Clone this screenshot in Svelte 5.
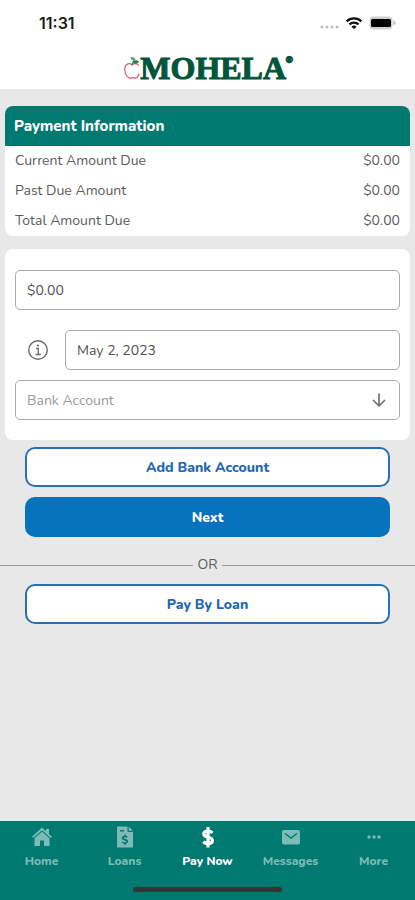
<script lang="ts">
	interface AmountRow {
		label: string;
		value: string;
	}

	const amounts: AmountRow[] = [
		{ label: 'Current Amount Due', value: '$0.00' },
		{ label: 'Past Due Amount', value: '$0.00' },
		{ label: 'Total Amount Due', value: '$0.00' }
	];

	const tabs = [
		{ id: 'home', label: 'Home' },
		{ id: 'loans', label: 'Loans' },
		{ id: 'pay', label: 'Pay Now' },
		{ id: 'messages', label: 'Messages' },
		{ id: 'more', label: 'More' }
	];

	let amount = $state('$0.00');
	let paymentDate = $state('May 2, 2023');
	let bankAccount = $state('');
	let activeTab = $state('pay');
</script>

<div class="screen">
	<div class="status-bar">
		<span class="time">11:31</span>
		<div class="status-icons">
			<svg width="20" height="16" viewBox="0 0 20 16" fill="#bdbdbd" aria-hidden="true">
				<circle cx="3" cy="12" r="1.5" />
				<circle cx="8" cy="12" r="1.5" />
				<circle cx="13" cy="12" r="1.5" />
				<circle cx="18" cy="12" r="1.5" />
			</svg>
			<svg width="18" height="16" viewBox="0 0 18 16" fill="none" stroke="#111" stroke-width="2.2" aria-hidden="true">
				<path d="M1.6 6.4a10.6 10.6 0 0 1 14.8 0" />
				<path d="M4.4 9.4a6.6 6.6 0 0 1 9.2 0" />
				<path d="M9 14.2 6.4 11.6a3.8 3.8 0 0 1 5.2 0z" fill="#111" stroke="none" />
			</svg>
			<svg width="27" height="16" viewBox="0 0 27 16" aria-hidden="true">
				<rect x="0.5" y="1.5" width="23" height="13" rx="4" fill="#cfcfcf" />
				<rect x="2" y="4" width="20" height="8" rx="1.5" fill="#000" />
				<path d="M24.5 5.5c1.4.4 2 1.3 2 2.5s-.6 2.1-2 2.5z" fill="#bbb" />
			</svg>
		</div>
	</div>

	<header class="brand">
		<svg class="apple" width="16" height="26" viewBox="0 0 17 26" fill="none" aria-hidden="true">
			<path
				d="M8.5 9.5C5 6.8.8 9.2.8 14.5c0 4.8 3 9.3 5.8 9.3 1.3 0 1.7-.6 2.6-.6s1.4.6 2.6.6c1.8 0 3.400-2 4.400-4.600M8.500 9.500c2.600-2 5.600-1.400 7.300 1"
				stroke="#dc5a60"
				stroke-width="1.3"
			/>
			<path d="M8.500 10.500C8.800 8 9.500 6 11 4.500" stroke="#387e5b" stroke-width="1.2" />
			<path d="M7 1.500c3-.5 5 .8 5.500 3.500-3 .4-5-.8-5.500-3.500z" fill="#5c9b7b" />
			<path d="M9.500 7c1.800-3 4.500-3 6.500-.8-1.800 2.800-4.500 3-6.500.8z" fill="#2f7d57" />
		</svg>
		<span class="wordmark">MOHELA</span>
		<span class="registered">®</span>
	</header>

	<main>
		<section class="card">
			<h1>Payment Information</h1>
			<dl>
				{#each amounts as row (row.label)}
					<div class="amount-row">
						<dt>{row.label}</dt>
						<dd>{row.value}</dd>
					</div>
				{/each}
			</dl>
		</section>

		<form class="card payment-form" onsubmit={(e) => e.preventDefault()}>
			<input class="field" type="text" aria-label="Payment amount" bind:value={amount} />
			<div class="date-row">
				<button type="button" class="info" aria-label="Payment date information">
					<svg width="22" height="22" viewBox="0 0 22 22" fill="none" stroke="#6b6b6b" aria-hidden="true">
						<circle cx="11" cy="11" r="9.3" stroke-width="1.4" />
						<path d="M9 9.5h2.3v6M8.500 15.500h5.300" stroke-width="1.3" />
						<circle cx="11" cy="6.5" r="1.1" fill="#6b6b6b" stroke="none" />
					</svg>
				</button>
				<input class="field" type="text" aria-label="Payment date" bind:value={paymentDate} />
			</div>
			<div class="select-wrap">
				<select class="field" aria-label="Bank account" bind:value={bankAccount}>
					<option value="">Bank Account</option>
				</select>
				<svg class="arrow" width="16" height="16" viewBox="0 0 16 16" fill="none" stroke="#707070" stroke-width="1.7" stroke-linecap="round" stroke-linejoin="round" aria-hidden="true">
					<path d="M8 2v12M2.500 8.500 8 14l5.500-5.500" />
				</svg>
			</div>
		</form>

		<div class="actions">
			<button type="button" class="btn">Add Bank Account</button>
			<button type="button" class="btn primary">Next</button>
		</div>
		<div class="divider"><span>OR</span></div>
		<div class="actions">
			<button type="button" class="btn">Pay By Loan</button>
		</div>
	</main>

	<nav>
		<div class="tabs">
			{#each tabs as tab (tab.id)}
				<button type="button" class="tab" class:active={activeTab === tab.id} onclick={() => (activeTab = tab.id)}>
					<svg width="24" height="24" viewBox="0 0 24 24" fill="currentColor" aria-hidden="true">
						{#if tab.id === 'home'}
							<path d="M12 2.500 2 11.700l1.300 1.400L12 5.200l8.700 7.900 1.300-1.400-3-2.800V4h-3v2.200z" />
							<path d="M12 6.400 4.500 13.200V21H10v-5.500h4V21h5.500v-7.800z" />
						{:else if tab.id === 'loans'}
							<path
								fill-rule="evenodd"
								d="M4 1.500h10.500V7H20v15.500H4zM7 5v1.500h4V5zM11.300 9.500v1.200c-1.600.3-2.500 1.100-2.500 2.300 0 1.500 1.200 2 2.700 2.400 1.300.3 1.700.5 1.700 1 0 .6-.5.8-1.300.8-.9 0-1.600-.3-2.300-.8l-.9 1.200c.7.6 1.600 1 2.600 1.100V20h1.500v-1.300c1.500-.3 2.300-1.200 2.300-2.400 0-1.500-1.200-2.100-2.700-2.400-1.200-.3-1.700-.5-1.700-1s.5-.7 1.200-.7c.7 0 1.400.2 2 .6l.8-1.200c-.5-.4-1.200-.7-1.900-.8V9.500z"
							/>
							<path d="M15.700 1.500 20 5.800h-4.300z" />
						{:else if tab.id === 'pay'}
							<path
								d="M12 2v20.500M16.500 7.900C15.300 6.700 13.700 6 12 6c-2.500 0-4.200 1.200-4.200 3.100 0 4.300 8.600 2.100 8.600 6.400 0 1.900-1.800 3.100-4.400 3.100-1.900 0-3.500-.7-4.800-1.900"
								fill="none"
								stroke="currentColor"
								stroke-width="3.2"
							/>
						{:else if tab.id === 'messages'}
							<rect x="3" y="5" width="18" height="14.500" rx="2" />
							<path d="m6 8.500 6 4.500 6-4.500" fill="none" stroke="#007970" stroke-width="1.4" />
						{:else}
							<circle cx="7" cy="12" r="1.7" />
							<circle cx="12" cy="12" r="1.7" />
							<circle cx="17" cy="12" r="1.7" />
						{/if}
					</svg>
					<span>{tab.label}</span>
				</button>
			{/each}
		</div>
		<div class="home-indicator"></div>
	</nav>
</div>

<style>
	:global(body) {
		margin: 0;
		background: #e8e8e8;
	}

	.screen {
		min-height: 100vh;
		display: flex;
		flex-direction: column;
		box-sizing: border-box;
		background: #e8e8e8;
		font-family: Nunito, Lato, sans-serif;
		font-size: 14px;
		color: #5c5c5c;
	}

	.status-bar {
		display: flex;
		align-items: center;
		justify-content: space-between;
		height: 46px;
		padding: 0 19px 0 39px;
		background: #fff;
	}

	.time {
		font-family: Inter, sans-serif;
		font-size: 16px;
		font-weight: 600;
		color: #1a1a1a;
	}

	.status-icons {
		display: flex;
		align-items: center;
		gap: 6px;
	}

	.brand {
		display: flex;
		align-items: flex-start;
		justify-content: center;
		height: 43px;
		padding-left: 2px;
		background: #fff;
	}

	.apple {
		margin-top: 9px;
	}

	.wordmark {
		font-family: 'Liberation Serif', serif;
		font-size: 32px;
		line-height: 44px;
		font-weight: 700;
		color: #00553a;
		-webkit-text-stroke: 1px #00553a;
	}

	.registered {
		margin-top: 8px;
		font-family: 'Liberation Sans', sans-serif;
		font-size: 9px;
		line-height: 12px;
		font-weight: 700;
		color: #00553a;
		-webkit-text-stroke: 1px #00553a;
	}

	main {
		flex: 1;
		padding-top: 17px;
	}

	.card {
		margin: 0 5px 13px;
		border-radius: 8px;
		background: #fff;
		overflow: hidden;
	}

	h1 {
		margin: 0;
		padding: 0 9px;
		background: #007970;
		color: #fff;
		font-size: 15px;
		line-height: 40px;
		font-weight: 800;
	}

	dl {
		margin: 0;
		padding: 0 10px;
	}

	.amount-row {
		display: flex;
		justify-content: space-between;
		line-height: 30px;
	}

	dd {
		margin: 0;
	}

	.payment-form {
		margin-bottom: 7px;
		padding: 21px 10px 20px;
	}

	.field {
		display: block;
		width: 100%;
		height: 40px;
		box-sizing: border-box;
		padding: 0 11px;
		border: 1px solid #aaa;
		border-radius: 5px;
		background: #fff;
		font: inherit;
		color: #505050;
		appearance: none;
	}

	.date-row {
		display: flex;
		margin: 20px 0 10px;
	}

	.info {
		display: flex;
		flex: none;
		align-items: center;
		justify-content: center;
		width: 50px;
		padding: 0 4px 0 0;
		border: none;
		background: none;
	}

	.select-wrap {
		position: relative;
	}

	select.field {
		color: #999;
	}

	.arrow {
		position: absolute;
		top: 12px;
		right: 13px;
		pointer-events: none;
	}

	.actions {
		display: flex;
		flex-direction: column;
		gap: 10px;
		padding: 0 25px;
	}

	.btn {
		height: 40px;
		border: 2px solid #2770b8;
		border-radius: 10px;
		background: #fff;
		font: inherit;
		font-weight: 800;
		color: #2367b2;
	}

	.primary {
		border-color: #0873bd;
		background: #0873bd;
		color: #fff;
	}

	.divider {
		display: flex;
		align-items: center;
		gap: 4px;
		margin: 18px 0 9px;
		line-height: 20px;
	}

	.divider::before,
	.divider::after {
		content: '';
		flex: 1;
		height: 1px;
		background: #999;
	}

	nav {
		padding-bottom: 8px;
		border-top: 3px solid #e3efed;
		background: #007970;
	}

	.tabs {
		display: grid;
		grid-template-columns: repeat(5, 1fr);
	}

	.tab {
		display: flex;
		flex-direction: column;
		align-items: center;
		gap: 4px;
		height: 66px;
		padding: 4px 0 0;
		border: none;
		background: none;
		font: inherit;
		font-size: 12px;
		line-height: 16px;
		font-weight: 800;
		color: #7dbbb6;
	}

	.tab.active {
		color: #fff;
	}

	.home-indicator {
		width: 36%;
		height: 5px;
		margin: 0 auto;
		border-radius: 3px;
		background: #353535;
	}

	button {
		cursor: pointer;
	}
</style>
